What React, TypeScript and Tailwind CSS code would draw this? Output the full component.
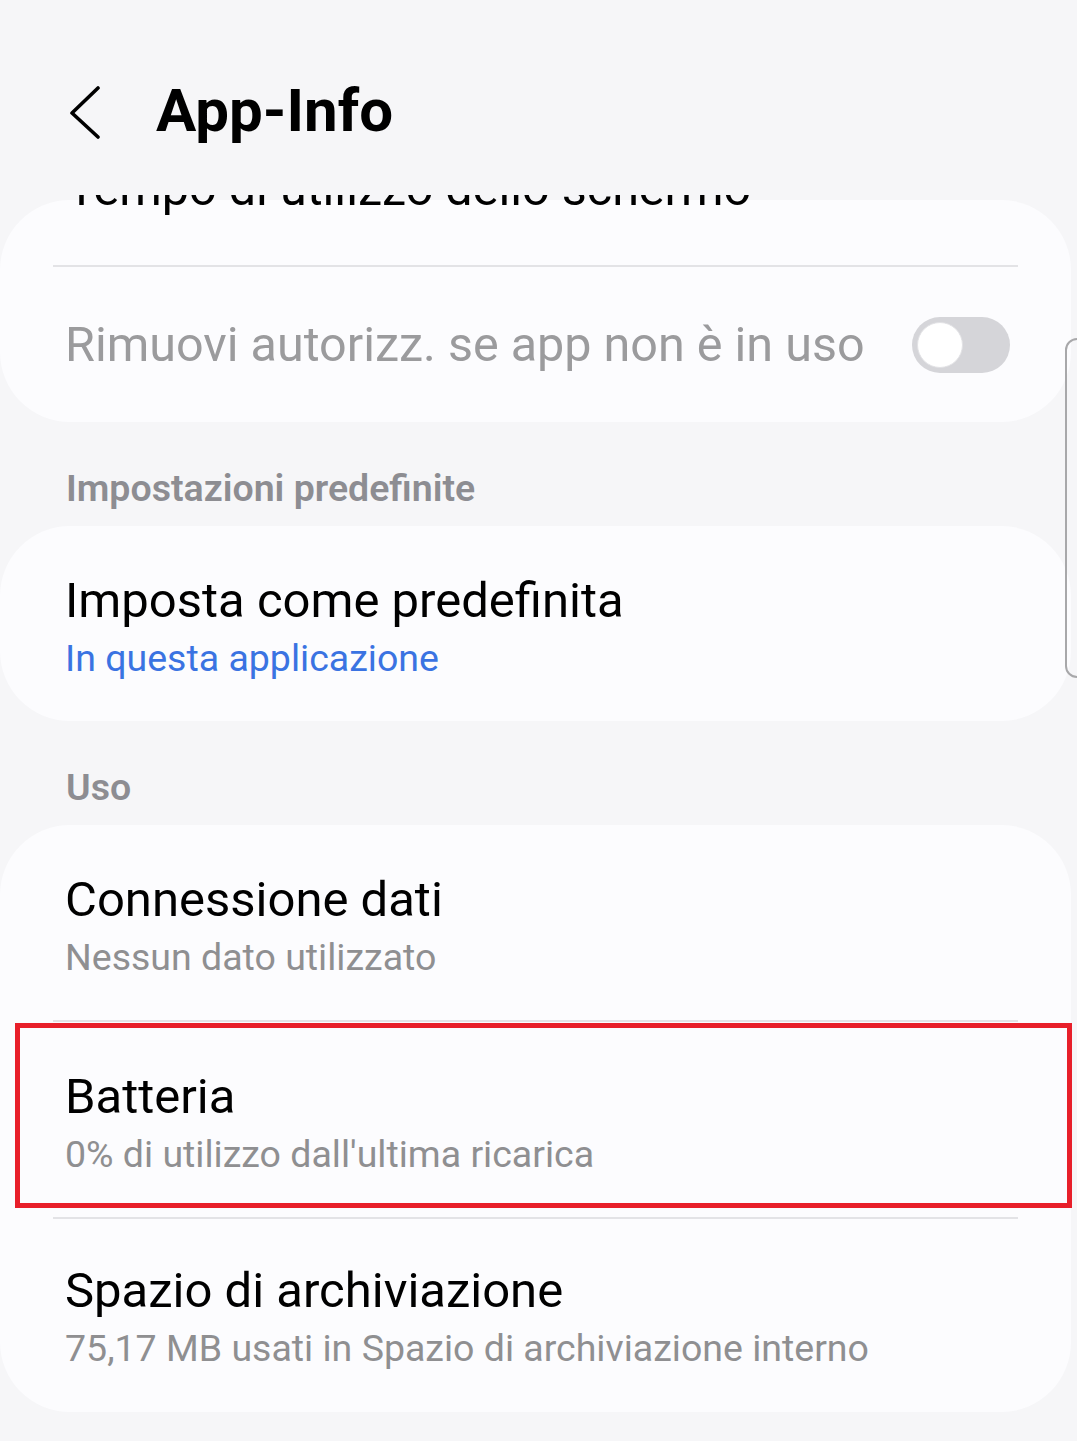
const TOGGLE_ROW = "Rimuovi autorizz. se app non è in uso";

type Item = { title: string; sub: string; blue?: boolean; marked?: boolean };

const USO: Item[] = [
  { title: "Connessione dati", sub: "Nessun dato utilizzato" },
  { title: "Batteria", sub: "0% di utilizzo dall'ultima ricarica", marked: true },
  { title: "Spazio di archiviazione", sub: "75,17 MB usati in Spazio di archiviazione interno" },
];

function Divider() {
  return <div className="mx-[53px] h-[2px] bg-[#e3e3e6]" />;
}

function SectionLabel({ children }: { children: string }) {
  return (
    <div className="pl-[66px] pt-[44px] pb-[16px] text-[37.5px] font-semibold leading-[44px] text-[#8d8d92]">
      {children}
    </div>
  );
}

function Row({ item, last }: { item: Item; last?: boolean }) {
  return (
    <div className={`relative flex flex-col pl-[65px] ${last ? "h-[193px] pt-[44px]" : "h-[195px] pt-[47px]"}`}>
      <div className="text-[49px] leading-[56px] text-black">{item.title}</div>
      <div className={`mt-[7px] text-[37.5px] leading-[44px] ${item.blue ? "text-[#3a73e2]" : "text-[#8f8f91]"}`}>
        {item.sub}
      </div>
      {item.marked && (
        <div className="pointer-events-none absolute left-[15px] -right-[1px] top-[1px] bottom-[9px] border-[5px] border-[#e81f2a]" />
      )}
    </div>
  );
}

export default function App() {
  return (
    <div className="relative h-[1441px] w-[1077px] overflow-hidden bg-[#f6f6f8] font-[Roboto,sans-serif]">
      {/* Header */}
      <header className="flex h-[195px] items-start pt-[75px]">
        <div className="flex h-[72px] items-center">
          <svg className="ml-[68px]" width="32" height="56" viewBox="0 0 32 56" fill="none">
            <path d="M30 5 L4 30 L30 54" stroke="#000" strokeWidth="3.6" strokeLinecap="round" strokeLinejoin="round" />
          </svg>
          <h1 className="ml-[56px] text-[60px] font-bold leading-[72px] text-black">App-Info</h1>
        </div>
      </header>

      {/* List, scrolled so the first row sits under the header */}
      <main className="h-[1246px] overflow-hidden pt-[5px]">
        <section className="mr-[6px] rounded-[70px] bg-[#fcfcfe]">
          <div className="flex h-[65px] items-end pb-[48px] pl-[67px]">
            <span className="whitespace-nowrap text-[48.5px] leading-[56px] text-black">
              Tempo di utilizzo dello schermo
            </span>
          </div>
          <Divider />
          <div className="flex h-[155px] items-center justify-between pl-[65px] pr-[61px]">
            <span className="text-[48.5px] leading-[56px] text-[#9b9b9d]">{TOGGLE_ROW}</span>
            <div className="flex h-[56px] w-[98px] items-center rounded-full bg-[#d5d5d9] pl-[5px]">
              <div className="h-[46px] w-[46px] rounded-full border border-[#e2e2e5] bg-white" />
            </div>
          </div>
        </section>

        <SectionLabel>Impostazioni predefinite</SectionLabel>
        <section className="mr-[6px] rounded-[70px] bg-[#fcfcfe]">
          <Row item={{ title: "Imposta come predefinita", sub: "In questa applicazione", blue: true }} />
        </section>

        <SectionLabel>Uso</SectionLabel>
        <section className="mr-[6px] rounded-[70px] bg-[#fcfcfe]">
          {USO.map((item, i) => (
            <div key={item.title}>
              {i > 0 && <Divider />}
              <Row item={item} last={i === USO.length - 1} />
            </div>
          ))}
        </section>
      </main>

      {/* fast scroll handle */}
      <div className="absolute -right-[20px] top-[338px] h-[340px] w-[32px] rounded-[12px] border-2 border-[#a8a8aa]" />
    </div>
  );
}
